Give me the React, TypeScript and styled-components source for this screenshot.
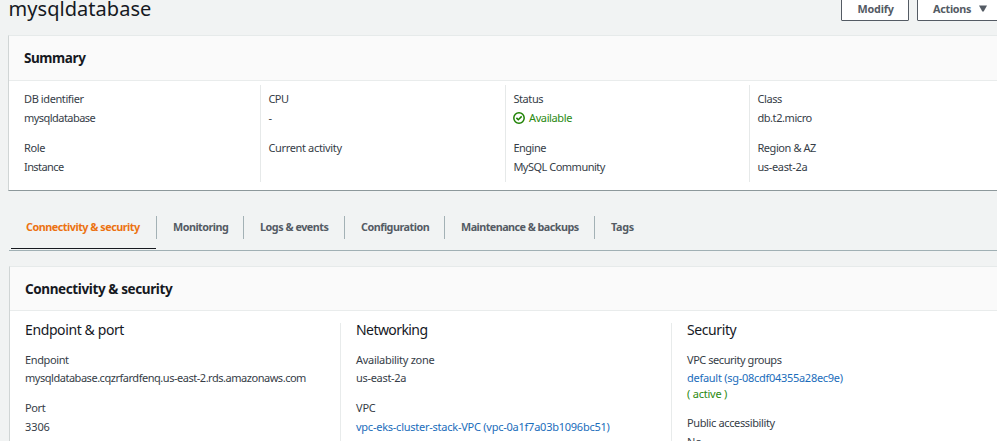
import React from "react";
import styled, { createGlobalStyle } from "styled-components";

const GlobalStyle = createGlobalStyle`
  * { box-sizing: border-box; }
  html, body { margin: 0; height: 441px; overflow: hidden; background: #f1f3f3; }
  body { font: 400 11px/18px "Noto Sans", "Open Sans", sans-serif; color: #363d47; }
  h1, h2, h3, dl, dt, dd { margin: 0; font-weight: 400; }
`;

const Page = styled.div`
  height: 441px;
  overflow: hidden;
  display: flex;
  flex-direction: column;
`;

const Tracked = styled.span<{ $ls?: number }>`
  letter-spacing: ${(p) => p.$ls ?? 0}px;
`;

const TitleBar = styled.header`
  flex: none;
  display: flex;
  justify-content: space-between;
  height: 35px;
  padding-left: 8px;
`;

const Title = styled.h1`
  font-size: 20px;
  line-height: 28px;
  letter-spacing: 0.04px;
  margin: -5px 0 0 0.6px;
  color: #16191f;
`;

const Buttons = styled.div`
  display: flex;
  gap: 8px;
  height: 21px;
  margin-right: -10px;
`;

const Button = styled.button<{ $width: number }>`
  display: flex;
  align-items: center;
  gap: 8px;
  width: ${(p) => p.$width}px;
  height: 25px;
  margin-top: -4px;
  padding: 0 0 0 ${(p) => (p.$width > 80 ? 15 : 15.5)}px;
  background: #fff;
  border: 1px solid #545b64;
  border-radius: 1px;
  font: 700 10.8px/18px "Noto Sans", sans-serif;
  color: #545b64;
`;

const Panel = styled.section<{ $left: number }>`
  flex: none;
  margin-left: ${(p) => p.$left}px;
  background: #fff;
  border-top: 1px solid #e6eaea;
  border-left: 1px solid #d0d5d5;
`;

const SummaryPanel = styled(Panel)`
  height: 156px;
  border-bottom: 1px solid #8d989b;
`;

const PanelHeader = styled.h2<{ $height: number }>`
  display: flex;
  align-items: center;
  height: ${(p) => p.$height}px;
  padding-left: 15px;
  background: #fafafa;
  border-bottom: 1px solid #e9ecec;
  font-size: 13.5px;
  font-weight: 700;
  color: #16191f;
`;

const SummaryGrid = styled.div`
  display: grid;
  grid-template-columns: 251px 245px 244px 1fr;
  grid-template-rows: 97px;
  margin-top: 4px;
`;

const SummaryColumn = styled.dl`
  padding: 5px 0 0 7.4px;
  border-left: 1px solid #e6e9e9;
  &:first-child { padding-left: 15px; border-left: 0; }
`;

const Field = styled.div<{ $gap: number; $step: number }>`
  margin-bottom: ${(p) => p.$gap}px;
  &:last-child { margin-bottom: 0; }
  dt { height: ${(p) => p.$step}px; }
`;

const Value = styled.dd<{ $tone?: "link" | "ok" }>`
  display: flex;
  align-items: center;
  height: 18px;
  white-space: nowrap;
  color: ${(p) => (p.$tone === "link" ? "#1a6dbb" : p.$tone === "ok" ? "#2b8a12" : "inherit")};
  svg { margin: 0 4px 0 -0.4px; }
`;

const StatusLine = styled(Value)`
  height: 15px;
  margin: -1px 0;
  line-height: 15px;
`;

const TabBar = styled.nav`
  flex: none;
  display: flex;
  height: 60px;
  margin: 0 0 15px 9px;
  padding-left: 2px;
  border-bottom: 1px solid #a0b0b4;
`;

const Tab = styled.div<{ $width: number; $active?: boolean }>`
  width: ${(p) => p.$width}px;
  height: 58px;
  padding-top: 25px;
  display: flex;
  font-weight: 700;
  font-size: 10.8px;
  color: ${(p) => (p.$active ? "#ec7211" : "#545b64")};
  background: ${(p) => (p.$active ? "linear-gradient(#16191f, #16191f) 0 100% / 145px 1px no-repeat" : "none")};
  span {
    flex: 1;
    height: 23px;
    line-height: 21px;
    padding-left: ${(p) => (p.$active ? 15 : 16)}px;
    white-space: nowrap;
    border-right: 1px solid #a3b1b5;
  }
  &:last-child span { border-right: 0; }
`;

const DetailGrid = styled.div`
  display: grid;
  grid-template-columns: 330px 331px 1fr;
  height: 140px;
  margin-top: 12px;
`;

const DetailColumn = styled.dl`
  padding-left: 15px;
  border-left: 1px solid #e8ebeb;
  &:first-child { border-left: 0; }
`;

const SectionTitle = styled.h3`
  height: 29px;
  margin-top: -1px;
  font-size: 14px;
  line-height: 16px;
  color: #16191f;
`;

type Item = {
  label: string; ls: number;
  value?: string; vls?: number;
  tone?: "link" | "ok"; icon?: boolean;
  status?: string;
};

const CheckIcon = () => (
  <svg width="12" height="12" viewBox="0 0 12 12" fill="none" stroke="#1d8102" strokeWidth="1.5">
    <circle cx="6" cy="6" r="5.2" />
    <path d="M3.4 5.9 5.3 7.8 8.7 4.4" />
  </svg>
);

const Caret = () => (
  <svg width="8" height="7" viewBox="0 0 8 7" fill="#545b64">
    <path d="M0 .5h8L4.7 6.5H3.3z" />
  </svg>
);

const FieldView = ({ item, step, gap }: { item: Item; step: number; gap: number }) => (
  <Field $step={step} $gap={gap}>
    <dt><Tracked $ls={item.ls}>{item.label}</Tracked></dt>
    {item.value && (
      <Value $tone={item.tone}>
        {item.icon && <CheckIcon />}
        <Tracked $ls={item.vls}>{item.value}</Tracked>
      </Value>
    )}
    {item.status && <StatusLine $tone="ok"><Tracked $ls={-0.22}>{item.status}</Tracked></StatusLine>}
  </Field>
);

const summary: Item[][] = [
  [
    { label: "DB identifier", ls: -0.4, value: "mysqldatabase", vls: -0.54 },
    { label: "Role", ls: -0.4, value: "Instance", vls: -0.58 },
  ],
  [
    { label: "CPU", ls: -0.5, value: "-" },
    { label: "Current activity", ls: -0.34 },
  ],
  [
    { label: "Status", ls: -0.4, value: "Available", vls: -0.38 },
    { label: "Engine", ls: -0.5, value: "MySQL Community", vls: -0.5 },
  ],
  [
    { label: "Class", ls: -0.4, value: "db.t2.micro", vls: -0.42 },
    { label: "Region & AZ", ls: -0.42, value: "us-east-2a", vls: -0.34 },
  ],
];
summary[2][0].tone = "ok";
summary[2][0].icon = true;

const tabs = [
  { name: "Connectivity & security", width: 146, ls: -0.49 },
  { name: "Monitoring", width: 87, ls: -0.52 },
  { name: "Logs & events", width: 101, ls: -0.48 },
  { name: "Configuration", width: 100, ls: -0.5 },
  { name: "Maintenance & backups", width: 150, ls: -0.55 },
  { name: "Tags", width: 60, ls: -0.3 },
];

const details: { title: string; ls: number; items: Item[] }[] = [
  {
    title: "Endpoint & port", ls: -0.39,
    items: [
      { label: "Endpoint", ls: -0.38, value: "mysqldatabase.cqzrfardfenq.us-east-2.rds.amazonaws.com", vls: -0.47 },
      { label: "Port", ls: -0.4, value: "3306", vls: -0.1 },
    ],
  },
  {
    title: "Networking", ls: -0.57,
    items: [
      { label: "Availability zone", ls: -0.28, value: "us-east-2a", vls: -0.3 },
      { label: "VPC", ls: -0.2, value: "vpc-eks-cluster-stack-VPC (vpc-0a1f7a03b1096bc51)", vls: -0.245, tone: "link" },
    ],
  },
  {
    title: "Security", ls: -0.4,
    items: [
      { label: "VPC security groups", ls: -0.45, value: "default (sg-08cdf04355a28ec9e)", vls: -0.28, tone: "link", status: "( active )" },
      { label: "Public accessibility", ls: -0.37, value: "No", vls: -0.2 },
    ],
  },
];

export default function App() {
  return (
    <Page>
      <GlobalStyle />
      <TitleBar>
        <Title>mysqldatabase</Title>
        <Buttons>
          <Button $width={68}><Tracked $ls={-0.2}>Modify</Tracked></Button>
          <Button $width={90}><Tracked $ls={-0.28}>Actions</Tracked><Caret /></Button>
        </Buttons>
      </TitleBar>
      <SummaryPanel $left={8}>
        <PanelHeader $height={45}><Tracked $ls={-0.42}>Summary</Tracked></PanelHeader>
        <SummaryGrid>
          {summary.map((items, i) => (
            <SummaryColumn key={i}>
              {items.map((item) => <FieldView key={item.label} item={item} step={19} gap={12} />)}
            </SummaryColumn>
          ))}
        </SummaryGrid>
      </SummaryPanel>
      <TabBar>
        {tabs.map((t, i) => (
          <Tab key={t.name} $width={t.width} $active={i === 0}>
            <Tracked $ls={t.ls}>{t.name}</Tracked>
          </Tab>
        ))}
      </TabBar>
      <Panel $left={9}>
        <PanelHeader $height={44}><Tracked $ls={-0.39}>Connectivity &amp; security</Tracked></PanelHeader>
        <DetailGrid>
          {details.map((d) => (
            <DetailColumn key={d.title}>
              <SectionTitle><Tracked $ls={d.ls}>{d.title}</Tracked></SectionTitle>
              {d.items.map((item, i) => (
                <FieldView key={item.label} item={item} step={i === 0 ? 18 : 19} gap={item.status ? 14 : 12} />
              ))}
            </DetailColumn>
          ))}
        </DetailGrid>
      </Panel>
    </Page>
  );
}
